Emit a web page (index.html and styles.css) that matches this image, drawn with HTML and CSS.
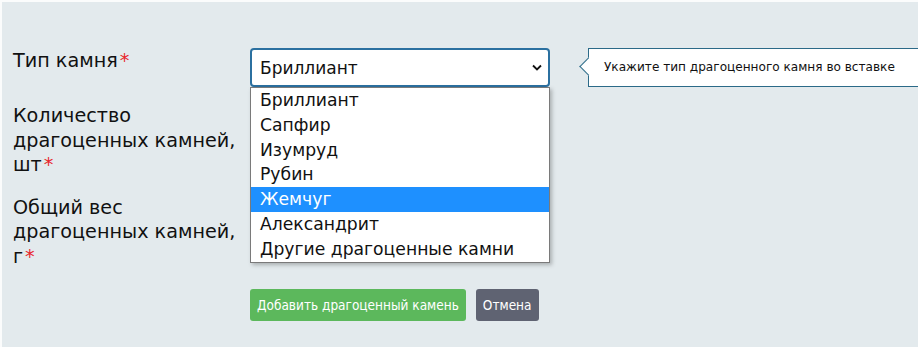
FILE: index.html
```html
<!DOCTYPE html>
<html lang="ru">
<head>
  <meta charset="UTF-8">
  <meta name="viewport" content="width=device-width, initial-scale=1.0">
  <title>Добавить драгоценный камень</title>
  <link rel="stylesheet" href="styles.css">
</head>
<body>
  <div class="page">
    <form class="stone-form">
      <div class="form-row">
        <label class="form-label">Тип камня<span class="req">*</span></label>
        <div class="form-field">
          <div class="select-box">
            <span>Бриллиант</span>
            <svg class="chevron" width="10" height="7" viewBox="0 0 10 7"><path d="M1 1.5 L5 5.5 L9 1.5" fill="none" stroke="#111" stroke-width="1.8"/></svg>
          </div>
          <ul class="select-list">
            <li>Бриллиант</li>
            <li>Сапфир</li>
            <li>Изумруд</li>
            <li>Рубин</li>
            <li class="active">Жемчуг</li>
            <li>Александрит</li>
            <li>Другие драгоценные камни</li>
          </ul>
          <div class="hint">Укажите тип драгоценного камня во вставке</div>
        </div>
      </div>
      <div class="form-row">
        <label class="form-label">Количество драгоценных камней, шт<span class="req">*</span></label>
        <div class="form-field"><input class="text-input" type="text"></div>
      </div>
      <div class="form-row">
        <label class="form-label">Общий вес драгоценных камней, г<span class="req">*</span></label>
        <div class="form-field"><input class="text-input" type="text"></div>
      </div>
      <div class="form-actions">
        <button type="button" class="btn btn-add">Добавить драгоценный камень</button>
        <button type="button" class="btn btn-cancel">Отмена</button>
      </div>
    </form>
  </div>
</body>
</html>
```

FILE: styles.css
```css
html {
  background: #fbfcfc;
}
body {
  margin: 0;
  padding: 2px 0 0 2px;
  font-family: "DejaVu Sans", Verdana, sans-serif;
  color: #111;
}
.page {
  background: #e3eaed;
  height: 345px;
  padding: 46px 0 0 11px;
  box-sizing: border-box;
  overflow: hidden;
}
.stone-form {
  display: flex;
  flex-direction: column;
}
.form-row {
  display: grid;
  grid-template-columns: 237px 300px;
  margin-bottom: 16px;
}
.form-row:nth-child(2) {
  margin-bottom: 17px;
}
.form-label {
  font-size: 19.2px;
  line-height: 24.5px;
  padding-top: 1px;
  padding-right: 10px;
}
.req {
  color: #e8262b;
  margin-left: 2px;
}
.form-field {
  position: relative;
}
.select-box {
  height: 39px;
  box-sizing: border-box;
  border: 2px solid #2b70a0;
  border-radius: 4px;
  background: #fff;
  display: flex;
  align-items: center;
  justify-content: space-between;
  padding: 0 6px 0 8px;
  font-size: 17px;
}
.select-list {
  position: absolute;
  top: 39px;
  left: 0;
  width: 300px;
  margin: 0;
  padding: 0;
  list-style: none;
  background: #fff;
  border: 1px solid #7a7a7a;
  box-sizing: border-box;
  box-shadow: 2px 2px 4px rgba(0, 0, 0, 0.25);
  z-index: 2;
  font-size: 17.2px;
}
.select-list li {
  height: 24.8px;
  line-height: 24.8px;
  padding-left: 9px;
}
.select-list li.active {
  background: #1e90ff;
  color: #fff;
}
.hint {
  position: absolute;
  top: 0;
  left: 338px;
  width: 340px;
  height: 39px;
  box-sizing: border-box;
  border: 1px solid #2b6a88;
  background: #fff;
  font-size: 12.1px;
  line-height: 37px;
  padding-left: 15px;
  white-space: nowrap;
}
.hint::before {
  content: "";
  position: absolute;
  left: -7px;
  top: 11px;
  width: 12px;
  height: 12px;
  background: #fff;
  border-left: 1px solid #2b6a88;
  border-bottom: 1px solid #2b6a88;
  transform: rotate(45deg);
}
.text-input {
  width: 300px;
  height: 39px;
  box-sizing: border-box;
  border: 1px solid #ccc;
  border-radius: 4px;
}
.form-actions {
  display: flex;
  gap: 10px;
  margin-left: 237px;
  margin-top: 4px;
}
.btn {
  font-family: "DejaVu Sans Condensed", "DejaVu Sans", sans-serif;
  font-size: 13.5px;
  color: #fff;
  border: none;
  border-radius: 3px;
  height: 32px;
  padding: 0 7px;
}
.btn-add {
  background: #5cb85c;
}
.btn-cancel {
  background: #5f6372;
}
```
